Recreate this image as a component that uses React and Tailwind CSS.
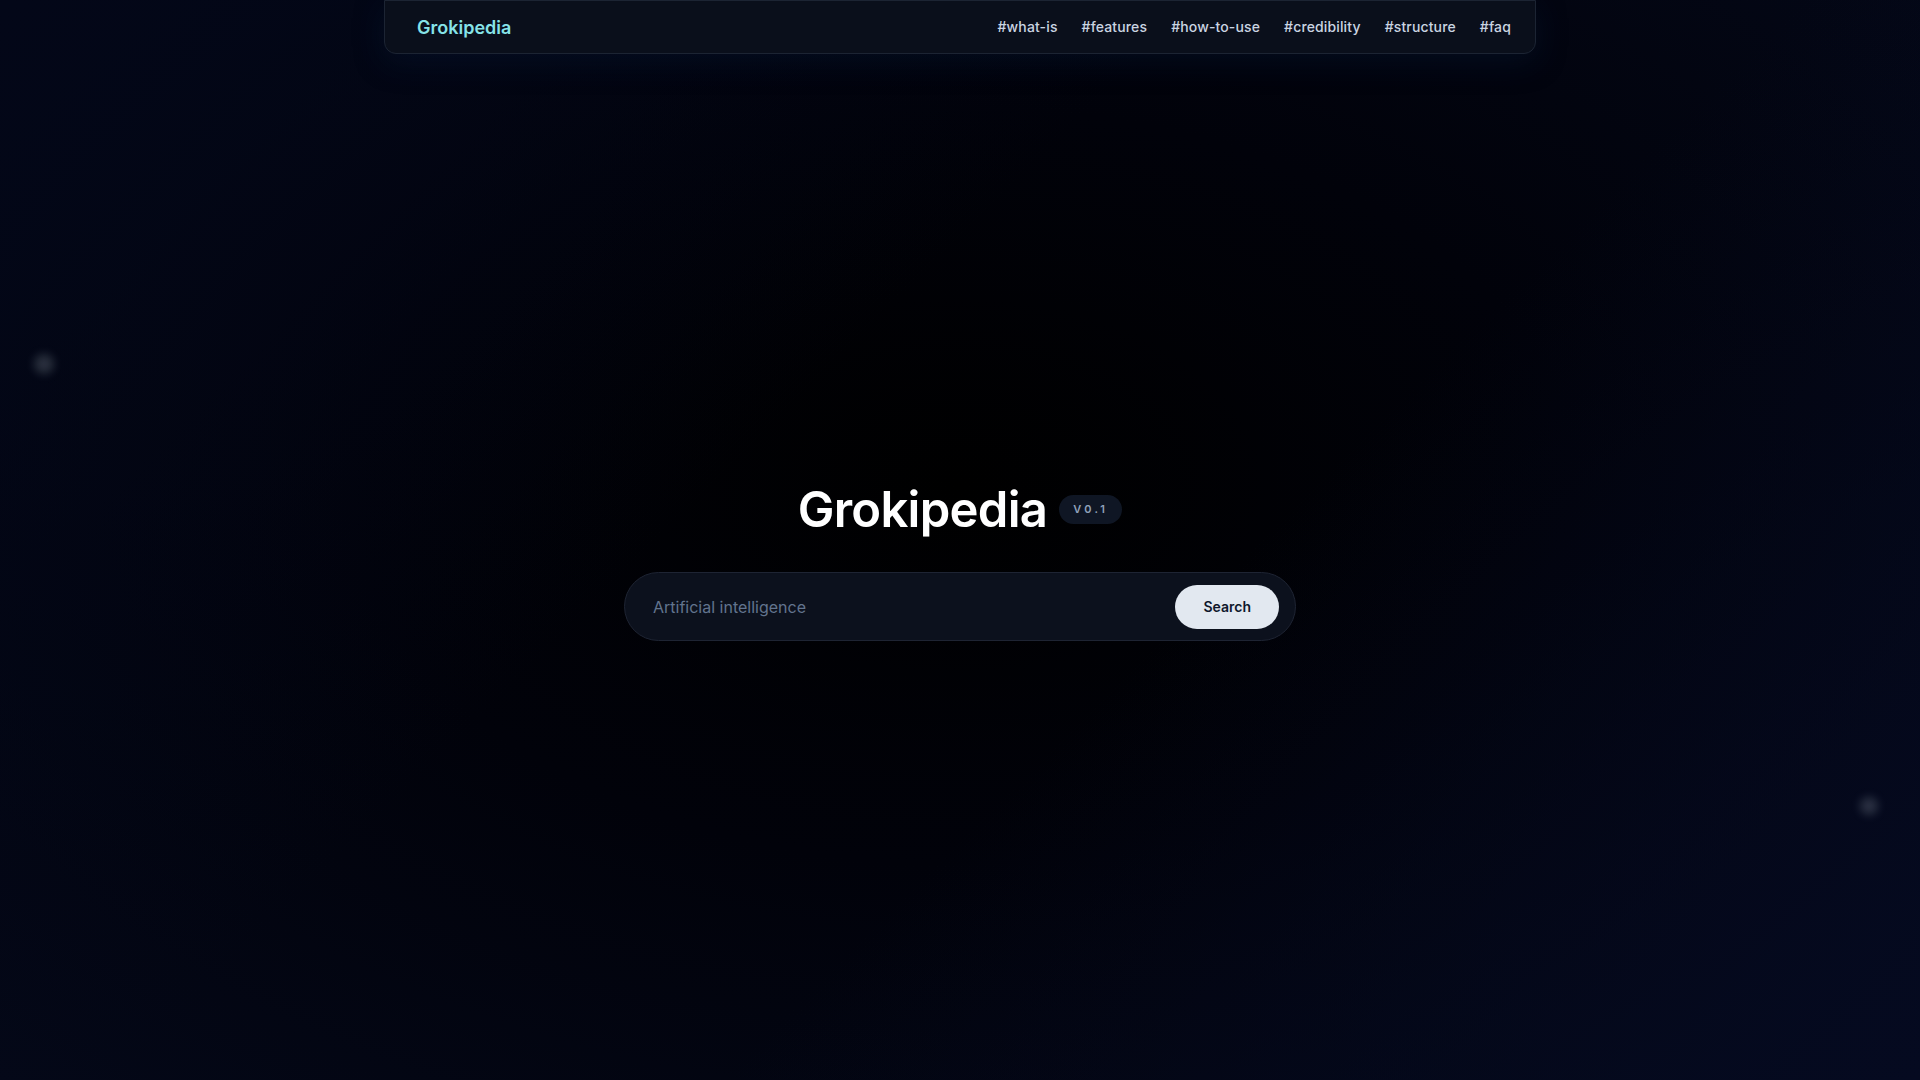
import React from "react";

const links = ["#what-is", "#features", "#how-to-use", "#credibility", "#structure", "#faq"];

function Star({ className }) {
  return <div className={`absolute rounded-full bg-slate-300/20 blur-[5px] ${className}`} />;
}

export default function App() {
  return (
    <div
      className="relative flex h-screen w-full flex-col overflow-hidden bg-[radial-gradient(ellipse_at_50%_45%,#000000_0%,#01020a_45%,#040818_100%)] text-white"
      style={{ fontFamily: "Inter, 'Noto Sans', sans-serif" }}
    >
      <div className="pointer-events-none absolute inset-0 bg-[linear-gradient(135deg,#030718_0%,rgba(0,0,0,0)_40%,rgba(0,0,0,0)_60%,#050a20_100%)]" />
      <Star className="left-[34px] top-[354px] h-[20px] w-[20px]" />
      <Star className="left-[1860px] top-[797px] h-[18px] w-[18px] bg-slate-300/10" />

      <header className="relative z-10 mx-auto flex h-[54px] w-full max-w-6xl items-center justify-between rounded-b-xl border border-[#1c2433] bg-[#0a0f1b] pl-8 pr-6 shadow-[0_8px_30px_rgba(10,30,60,0.35)]">
        <a className="text-[18px] font-semibold text-[#86e3e8]">Grokipedia</a>
        <nav className="flex items-center gap-6 text-sm font-medium tracking-[0.01em] text-slate-300">
          {links.map((l) => (
            <a key={l}>{l}</a>
          ))}
        </nav>
      </header>

      <main className="relative z-10 -mt-2 flex flex-1 flex-col items-center justify-center">
        <div className="flex items-center gap-3">
          <h1 className="text-[49px] font-semibold leading-none tracking-[-0.015em] text-white">Grokipedia</h1>
          <span className="rounded-full bg-[#0f1624] px-[14px] py-[6px] text-[11px] font-semibold tracking-[0.3em] text-slate-400">
            V0.1
          </span>
        </div>

        <div className="mt-[38px] flex h-[69px] w-full max-w-2xl items-center rounded-full border border-[#1e2433] bg-[#0c111d] pl-7 pr-4">
          <input
            className="flex-1 bg-transparent text-base text-slate-300 placeholder:text-slate-500 outline-none"
            placeholder="Artificial intelligence"
          />
          <button className="rounded-full bg-slate-200 px-7 py-3 text-sm font-semibold text-slate-900">Search</button>
        </div>
      </main>
    </div>
  );
}
